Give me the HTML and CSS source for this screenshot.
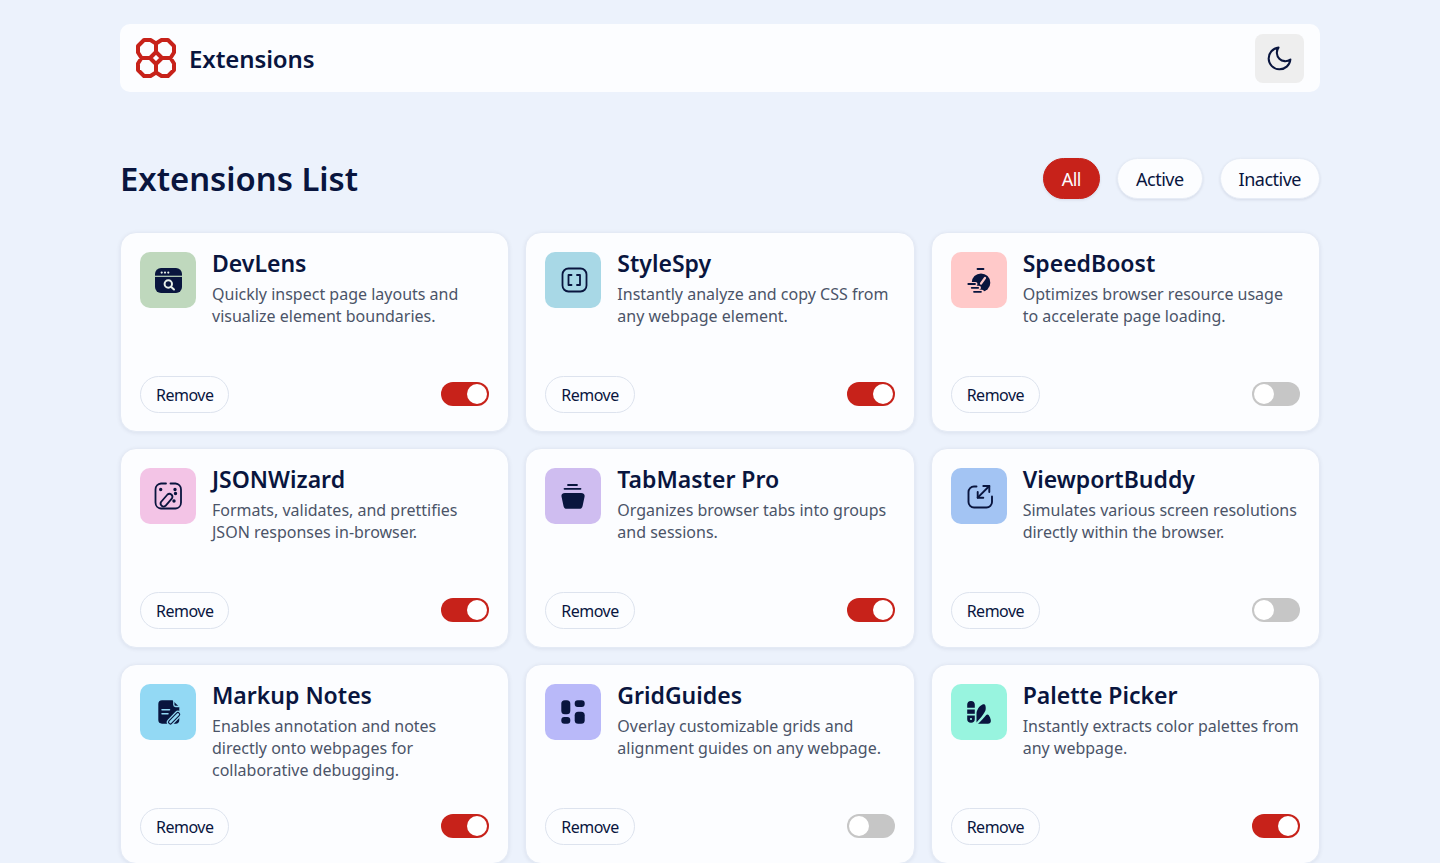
FILE: index.html
```html
<!DOCTYPE html>
<html lang="en">
<head>
    <meta charset="UTF-8">
    <meta name="viewport" content="width=device-width, initial-scale=1.0">
    <title>Extensions</title>
    <link rel="stylesheet" href="styles.css">
</head>
<body>
<div class="page">

    <header class="topbar">
        <div class="brand">
            <svg class="logo" viewBox="0 0 40 40" fill="none" stroke="#c7221a" stroke-width="4" stroke-linejoin="round">
                <path d="M20 5.500l5.500-3.500H32L38 8v6.500L34.500 20l3.500 5.500V32l-6 6h-6.500L20 34.500 14.500 38H8l-6-6v-6.500L5.500 20 2 14.500V8l6-6h6.500z"/>
                <path d="M20 14l6 6-6 6-6-6z"/>
                <path d="M20 5.500V14M20 26v8.500M5.500 20H14M26 20h8.500"/>
            </svg>
            <span class="brand-name">Extensions</span>
        </div>
        <button class="theme-btn" type="button" aria-label="Toggle theme">
            <svg viewBox="0 0 24 24" fill="none" stroke="#09153e" stroke-width="1.700" stroke-linecap="round" stroke-linejoin="round">
                <path d="M21 12.800A9 9 0 1 1 11.200 3a7 7 0 0 0 9.800 9.800z"/>
            </svg>
        </button>
    </header>

    <section class="list-head">
        <h1>Extensions List</h1>
        <div class="filters">
            <button class="pill pill-active" type="button">All</button>
            <button class="pill" type="button">Active</button>
            <button class="pill" type="button">Inactive</button>
        </div>
    </section>

    <main class="grid">

        <article class="card">
            <div class="card-top">
                <div class="icon green">
                    <svg viewBox="0 0 32 32">
                        <rect x="3" y="4" width="27" height="25" rx="6" fill="#09153e"/>
                        <path d="M3 12.300h27" stroke="#bfd8bd" stroke-width="1.200"/>
                        <circle cx="9.700" cy="8.600" r="1.100" fill="#e8efe8"/>
                        <circle cx="13" cy="8.600" r="1.100" fill="#e8efe8"/>
                        <circle cx="16.300" cy="8.600" r="1.100" fill="#e8efe8"/>
                        <circle cx="16.300" cy="20" r="3.700" fill="none" stroke="#e8efe8" stroke-width="2"/>
                        <path d="M19 22.700l3 2.800" stroke="#e8efe8" stroke-width="2" stroke-linecap="round"/>
                    </svg>
                </div>
                <div>
                    <h2>DevLens</h2>
                    <p>Quickly inspect page layouts and visualize element boundaries.</p>
                </div>
            </div>
            <div class="card-bottom">
                <button class="remove" type="button">Remove</button>
                <span class="toggle on"><span class="knob"></span></span>
            </div>
        </article>

        <article class="card">
            <div class="card-top">
                <div class="icon teal">
                    <svg viewBox="0 0 32 32" fill="none" stroke="#09153e" stroke-width="1.800" stroke-linecap="round" stroke-linejoin="round">
                        <rect x="5.500" y="4.500" width="24" height="23" rx="6"/>
                        <path d="M14.500 11h-3v10h3"/>
                        <path d="M20 11h3v10h-3"/>
                    </svg>
                </div>
                <div>
                    <h2>StyleSpy</h2>
                    <p>Instantly analyze and copy CSS from any webpage element.</p>
                </div>
            </div>
            <div class="card-bottom">
                <button class="remove" type="button">Remove</button>
                <span class="toggle on"><span class="knob"></span></span>
            </div>
        </article>

        <article class="card">
            <div class="card-top">
                <div class="icon pink">
                    <svg viewBox="0 0 32 32" fill="none" stroke-linecap="round">
                        <circle cx="18" cy="18.700" r="9.300" fill="#09153e"/>
                        <path d="M14.500 5h6" stroke="#09153e" stroke-width="1.800"/>
                        <path d="M18 19.500l4-5.500" stroke="#ffc9c9" stroke-width="2.200"/>
                        <path d="M3 20h9.500M6.500 23.800h9.500M9.500 27.800h9.500" stroke="#ffc9c9" stroke-width="4"/>
                        <path d="M5.300 20h6.700M8.700 23.800h6.500M11 27.800h7" stroke="#09153e" stroke-width="1.800"/>
                    </svg>
                </div>
                <div>
                    <h2>SpeedBoost</h2>
                    <p>Optimizes browser resource usage to accelerate page loading.</p>
                </div>
            </div>
            <div class="card-bottom">
                <button class="remove" type="button">Remove</button>
                <span class="toggle"><span class="knob"></span></span>
            </div>
        </article>

        <article class="card">
            <div class="card-top">
                <div class="icon orchid">
                    <svg viewBox="0 0 32 32" fill="none" stroke="#09153e" stroke-width="1.800" stroke-linecap="round" stroke-linejoin="round">
                        <path d="M14 3.500H9A6 6 0 0 0 3.500 9.500v13a6 6 0 0 0 5.500 6h14.500a6 6 0 0 0 5.500-6v-13a6 6 0 0 0-5.500-6h-5"/>
                        <path d="M9 22l6.500-7.500a3 3 0 0 1 4.500 3.800l-6.500 7.500a3 3 0 0 1-4.500-3.800z"/>
                        <circle cx="8.700" cy="9.500" r=".800" fill="#09153e"/>
                        <circle cx="23" cy="9.500" r=".800" fill="#09153e"/>
                        <circle cx="23.500" cy="13.500" r=".800" fill="#09153e"/>
                        <circle cx="22" cy="21" r=".800" fill="#09153e"/>
                    </svg>
                </div>
                <div>
                    <h2>JSONWizard</h2>
                    <p>Formats, validates, and prettifies JSON responses in-browser.</p>
                </div>
            </div>
            <div class="card-bottom">
                <button class="remove" type="button">Remove</button>
                <span class="toggle on"><span class="knob"></span></span>
            </div>
        </article>

        <article class="card">
            <div class="card-top">
                <div class="icon lilac">
                    <svg viewBox="0 0 32 32" fill="none" stroke="#09153e" stroke-linecap="round">
                        <path d="M11 5h9M7.500 8.800h16" stroke-width="1.800"/>
                        <path d="M8 13h16c2.500 0 4 1.200 3.600 3.500l-2 9.500c-.4 2-1.600 2.800-3.300 2.800H9.800c-1.700 0-2.900-.8-3.300-2.800l-2-9.500C4.100 14.200 5.500 13 8 13z" fill="#09153e" stroke="none"/>
                    </svg>
                </div>
                <div>
                    <h2>TabMaster Pro</h2>
                    <p>Organizes browser tabs into groups and sessions.</p>
                </div>
            </div>
            <div class="card-bottom">
                <button class="remove" type="button">Remove</button>
                <span class="toggle on"><span class="knob"></span></span>
            </div>
        </article>

        <article class="card">
            <div class="card-top">
                <div class="icon blue">
                    <svg viewBox="0 0 32 32" fill="none" stroke="#09153e" stroke-width="1.900" stroke-linecap="round" stroke-linejoin="round">
                        <path d="M13.500 6.500H11a5.500 5.500 0 0 0-5.500 5.500v10a5.500 5.500 0 0 0 5.500 5.500h12.500a5.500 5.500 0 0 0 5.500-5.500v-5.500"/>
                        <path d="M14.700 17.700L26.300 6"/>
                        <path d="M20.300 6h6v6"/>
                        <path d="M14.700 12v5.700h5.600"/>
                    </svg>
                </div>
                <div>
                    <h2>ViewportBuddy</h2>
                    <p>Simulates various screen resolutions directly within the browser.</p>
                </div>
            </div>
            <div class="card-bottom">
                <button class="remove" type="button">Remove</button>
                <span class="toggle"><span class="knob"></span></span>
            </div>
        </article>

        <article class="card">
            <div class="card-top">
                <div class="icon sky">
                    <svg viewBox="0 0 32 32" fill="none" stroke-linecap="round" stroke-linejoin="round">
                        <path d="M10 4.300h10.500l6.800 6.800v13c0 2.500-1.500 3.600-3.500 3.600H10c-2.400 0-3.700-1.400-3.700-3.600V8c0-2.200 1.300-3.700 3.700-3.700z" fill="#09153e"/>
                        <path d="M21.800 4.500v4.200c0 1.100.7 1.800 1.800 1.800h3.700" stroke="#93d9f4" stroke-width="1.300"/>
                        <path d="M10 13.700h7.500M10 17.700h6" stroke="#93d9f4" stroke-width="1.500"/>
                        <path d="M18.300 26.200l7.600-7.900" stroke="#93d9f4" stroke-width="7"/>
                        <path d="M18.300 26.200l7.600-7.900" stroke="#09153e" stroke-width="4.600"/>
                        <path d="M18.300 26.200l7.600-7.900" stroke="#93d9f4" stroke-width="2.400"/>
                    </svg>
                </div>
                <div>
                    <h2>Markup Notes</h2>
                    <p>Enables annotation and notes directly onto webpages for collaborative debugging.</p>
                </div>
            </div>
            <div class="card-bottom">
                <button class="remove" type="button">Remove</button>
                <span class="toggle on"><span class="knob"></span></span>
            </div>
        </article>

        <article class="card">
            <div class="card-top">
                <div class="icon violet">
                    <svg viewBox="0 0 32 32" fill="#09153e">
                        <rect x="4.300" y="4.300" width="9" height="14" rx="3.500"/>
                        <rect x="17.700" y="4.300" width="10" height="6.800" rx="3"/>
                        <rect x="4.300" y="21" width="9" height="6.800" rx="3"/>
                        <rect x="17.700" y="15.800" width="10" height="12" rx="3.500"/>
                    </svg>
                </div>
                <div>
                    <h2>GridGuides</h2>
                    <p>Overlay customizable grids and alignment guides on any webpage.</p>
                </div>
            </div>
            <div class="card-bottom">
                <button class="remove" type="button">Remove</button>
                <span class="toggle"><span class="knob"></span></span>
            </div>
        </article>

        <article class="card">
            <div class="card-top">
                <div class="icon mint">
                    <svg viewBox="0 0 32 32" fill="#09153e">
                        <path d="M8 5a3.800 3.800 0 0 1 3.800 3.800v3H4.200v-3A3.800 3.800 0 0 1 8 5z"/>
                        <rect x="4.200" y="13.500" width="7.600" height="4.300"/>
                        <path d="M4.200 19.500h7.600v3.400a3.800 3.800 0 0 1-7.600 0z"/>
                        <circle cx="8" cy="23" r="1.100" fill="#98f4df"/>
                        <path d="M13.500 26.500V18c0-4 2.800-8 6-9.500 1.700-.7 2.700 0 3 1.500.5 2.500.3 4.200-.8 6-1.800 3.200-5 7-8.200 10.500z"/>
                        <path d="M15 27.700c2.800-2.600 6-6 8-8.500.8-1 2-1 2.800 0 1 1.500 1.700 3.200 2 4.800.4 2.300-.7 3.700-3 3.700z"/>
                    </svg>
                </div>
                <div>
                    <h2>Palette Picker</h2>
                    <p>Instantly extracts color palettes from any webpage.</p>
                </div>
            </div>
            <div class="card-bottom">
                <button class="remove" type="button">Remove</button>
                <span class="toggle on"><span class="knob"></span></span>
            </div>
        </article>

    </main>
</div>
</body>
</html>
```

FILE: styles.css
```css
* {
    box-sizing: border-box;
}
body {
    margin: 0;
    background-color: #ecf2fc;
    color: #09153e;
    font-family: "Noto Sans", sans-serif;
}
button {
    font-family: inherit;
    color: inherit;
    cursor: pointer;
}
.page {
    width: 1200px;
    margin: 0 auto;
    padding: 24px 0 40px;
}

/* top bar */
.topbar {
    display: flex;
    align-items: center;
    justify-content: space-between;
    height: 68px;
    padding: 0 16px;
    background: #fcfdff;
    border-radius: 10px;
}
.brand {
    display: flex;
    align-items: center;
    gap: 13px;
}
.logo {
    width: 40px;
    height: 40px;
}
.brand-name {
    font-size: 24px;
    font-weight: 600;
    letter-spacing: -0.1px;
}
.theme-btn {
    display: flex;
    align-items: center;
    justify-content: center;
    width: 49px;
    height: 49px;
    margin-top: 1px;
    padding: 0;
    border: none;
    border-radius: 8px;
    background: #eeeeee;
}
.theme-btn svg {
    width: 29px;
    height: 29px;
}

/* heading and filters */
.list-head {
    display: flex;
    align-items: center;
    justify-content: space-between;
    margin-top: 64px;
    height: 44px;
}
h1 {
    margin: 0;
    font-size: 32.800px;
    font-weight: 600;
}
.filters {
    display: flex;
    gap: 17px;
    align-self: flex-end;
    margin-bottom: 1px;
}
.pill {
    height: 41px;
    padding: 0 18px;
    border: 1px solid #e6ecf6;
    border-radius: 21px;
    background: #fcfdff;
    font-size: 18px;
    letter-spacing: -0.5px;
    box-shadow: 0 1px 3px rgba(9, 21, 62, 0.1);
}
.pill-active {
    background: #c7221a;
    border-color: #c7221a;
    color: #fcfdff;
}

/* cards */
.grid {
    display: grid;
    grid-template-columns: repeat(3, 1fr);
    grid-auto-rows: 200px;
    gap: 16px;
    margin-top: 32px;
}
.card {
    display: flex;
    flex-direction: column;
    justify-content: space-between;
    padding: 19px 19px 18px;
    background: #fcfdff;
    border: 1px solid #e4eaf5;
    border-radius: 16px;
    box-shadow: 0 1px 4px rgba(9, 21, 62, 0.08);
}
.card-top {
    display: flex;
    gap: 16px;
}
.card h2 {
    margin: -1px 0 8px;
    font-size: 23px;
    line-height: 24px;
    font-weight: 600;
}
.card p {
    margin: 0;
    font-size: 16px;
    line-height: 22px;
    color: #4b5468;
}
.icon {
    display: flex;
    align-items: center;
    justify-content: center;
    flex-shrink: 0;
    width: 56px;
    height: 56px;
    border-radius: 10px;
}
.icon svg {
    width: 32px;
    height: 32px;
}
.green { background: #bfd8bd; }
.teal { background: #a8d8e6; }
.pink { background: #ffc9c9; }
.orchid { background: #f3c4e6; }
.lilac { background: #cfbdf0; }
.blue { background: #a3c4f3; }
.sky { background: #93d9f4; }
.violet { background: #b9b9f9; }
.mint { background: #98f4df; }

.card-bottom {
    display: flex;
    align-items: center;
    justify-content: space-between;
}
.remove {
    height: 37px;
    margin-top: 1px;
    padding: 0 15px;
    border: 1px solid #dde3ee;
    border-radius: 19px;
    background: #fcfdff;
    font-size: 16px;
    letter-spacing: -0.500px;
}
.toggle {
    display: flex;
    width: 48px;
    height: 24px;
    padding: 2px;
    border-radius: 12px;
    background: #c6c6c6;
}
.toggle.on {
    justify-content: flex-end;
    background: #c7221a;
}
.knob {
    width: 20px;
    height: 20px;
    border-radius: 50%;
    background: #ffffff;
}
```
